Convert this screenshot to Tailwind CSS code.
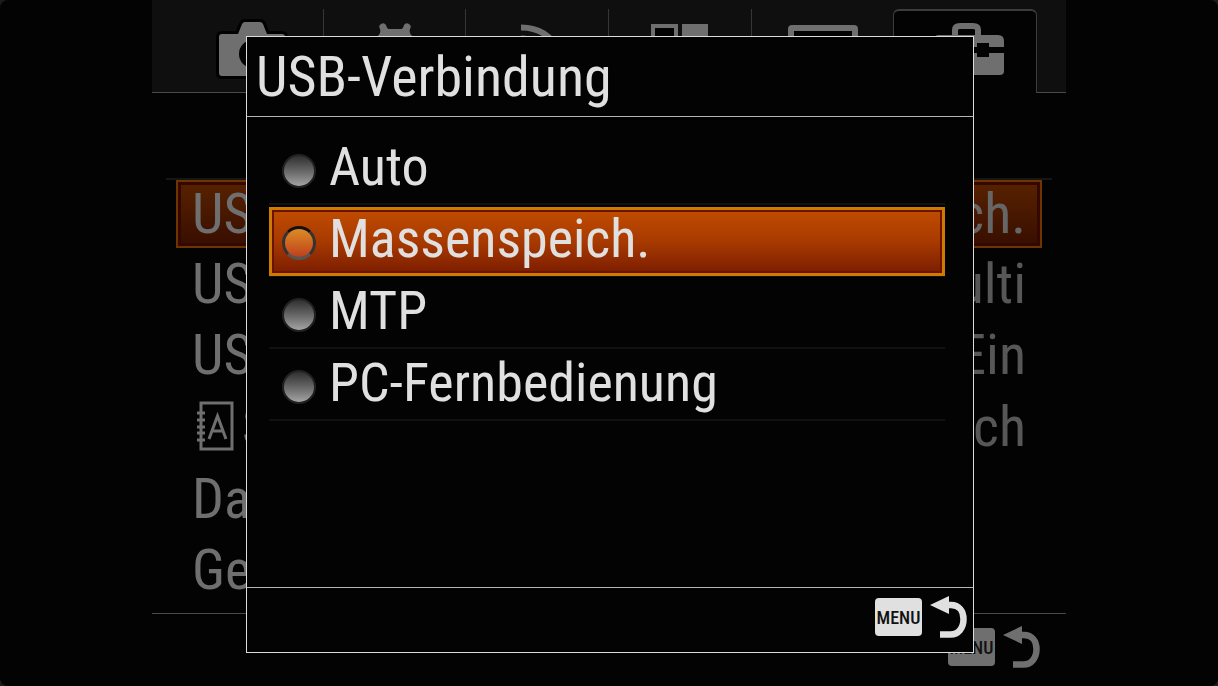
<!DOCTYPE html>
<html lang="de">
<head>
    <meta charset="UTF-8">
    <meta name="viewport" content="width=device-width, initial-scale=1.0">
    <title>USB-Verbindung</title>
    <script src="https://cdn.jsdelivr.net/npm/@tailwindcss/browser@4"></script>
</head>
<body class="bg-[#1c1c1c] font-['Liberation_Sans_Narrow','Roboto_Condensed','Open_Sans_Condensed','Liberation_Sans',sans-serif]">

<svg class="hidden">
    <symbol id="back" viewBox="0 0 37 42">
        <path d="M0 9 19 0v18z" fill="currentColor"/>
        <path d="M17 9h4c8 0 12.500 6 12.500 14 0 9-5 15.500-13 15.500H10" fill="none" stroke="currentColor" stroke-width="6.500"/>
    </symbol>
</svg>

<div class="relative min-h-screen bg-[#030303] rounded-lg overflow-hidden flex flex-col">

    <!-- Menü im Hintergrund -->
    <main class="w-full max-w-[914px] mx-auto grow flex flex-col text-[#6f6f6f]">
        <nav class="h-[93px] pt-[9px] flex bg-[#0f0f0f]">
            <div class="w-[29px] border-b border-[#4a4a4a] -mt-[9px]"></div>
            <button type="button" aria-label="Kamera" class="flex-1 border-b border-b-[#4a4a4a] flex justify-center pt-[13px]">
                <svg class="w-[68px] h-14 overflow-visible" viewBox="0 0 68 56">
                    <path d="M4 12H20L24 2Q25 0 27 0H42Q44 0 45 2L49 12H64Q67 12 67 15V51Q67 54 64 54H4Q1 54 1 51V15Q1 12 4 12Z" fill="currentColor" stroke="#000" stroke-width="6" paint-order="stroke"/>
                    <circle cx="35" cy="32" r="14" fill="#030303"/>
                </svg>
            </button>
            <button type="button" aria-label="Benutzereinstellungen" class="flex-1 border-b border-b-[#4a4a4a] border-l border-l-[#363636] flex justify-center pt-[14px]">
                <svg class="w-14 h-14" viewBox="0 0 56 56">
                    <path d="M14 1Q17-1 19 2 20 6 22 6H34Q36 6 37 2 39-1 42 1 45 3 43 6 42 9 44 12L56 20V36L44 42 42 54H14L12 42 0 36V20L12 12Q14 9 13 6 11 3 14 1Z" fill="currentColor"/>
                    <circle cx="28" cy="28" r="9" fill="#030303"/>
                </svg>
            </button>
            <button type="button" aria-label="Drahtlos" class="flex-1 border-b border-b-[#4a4a4a] border-l border-l-[#363636] flex justify-center pt-[15px]">
                <svg class="w-10 h-14 overflow-visible" viewBox="0 0 40 56" fill="none" stroke="currentColor" stroke-width="6">
                    <path d="M4 3.500C20 3.500 34 10 42 28M4 14.500C15 14.500 25 22 30 32M4 26C11 26 16 30 19 37"/>
                </svg>
            </button>
            <button type="button" aria-label="Applikation" class="flex-1 border-b border-b-[#4a4a4a] border-l border-l-[#363636] flex justify-center pt-[15px]">
                <svg class="w-[58px] h-14" viewBox="0 0 58 56" fill="currentColor">
                    <path d="M2 2H25V25H2Z" fill="#030303" stroke="currentColor" stroke-width="4"/>
                    <path d="M31 0H57V26H31ZM0 30H26V56H0ZM31 30H57V56H31Z"/>
                </svg>
            </button>
            <button type="button" aria-label="Wiedergabe" class="flex-1 border-b border-b-[#4a4a4a] border-l border-l-[#363636] flex justify-center pt-4">
                <svg class="w-[70px] h-[52px]" viewBox="0 0 70 52">
                    <rect x="3" y="3" width="64" height="46" rx="1" fill="#030303" stroke="currentColor" stroke-width="6"/>
                    <path d="M28 15 46 26 28 37Z" fill="currentColor"/>
                </svg>
            </button>
            <button type="button" aria-label="Einstellung" class="flex-1 rounded-t-md border-t-2 border-r border-l border-[#3c3c3c] bg-[#030303] flex justify-center pt-3">
                <svg class="w-[78px] h-[54px] ml-2" viewBox="0 0 78 54">
                    <path d="M25 13V7Q25 3 30 3H43Q48 3 48 7V13" fill="none" stroke="currentColor" stroke-width="6"/>
                    <path d="M4 24V17Q4 12 9 12H68Q74 12 74 18V24H59V20H47V24H31V20H19V24ZM4 30H19V34H31V30H47V34H59V30H74V48Q74 52 70 52H8Q4 52 4 48Z" fill="currentColor"/>
                </svg>
            </button>
            <div class="w-[29px] border-b border-[#4a4a4a]"></div>
        </nav>

        <ul class="mt-[85px] mx-[14px] px-[10px] border-t-2 border-[#161616] text-[56px] leading-[68px] whitespace-nowrap">
            <li class="h-[70px]">
                <button type="button" class="w-full h-[68px] px-[14px] flex justify-between leading-[64px] border-2 border-[#6e3500] bg-linear-to-b from-[#582200] to-[#380e00] shadow-[inset_0_0_0_3px_#340700]">
                    <span>USB</span>
                    <span class="text-[#666]">ich.</span>
                </button>
            </li>
            <li>
                <button type="button" class="w-full h-[71px] px-4 flex justify-between">
                    <span>USB</span>
                    <span class="text-[#575757]">Multi</span>
                </button>
            </li>
            <li>
                <button type="button" class="w-full h-[72px] px-4 flex justify-between">
                    <span>USB</span>
                    <span class="text-[#575757]">Ein</span>
                </button>
            </li>
            <li>
                <button type="button" class="w-full h-[72px] px-4 flex justify-between">
                    <span class="flex gap-[6px]">
                        <svg class="w-11 h-[51px] mt-2 shrink-0" viewBox="0 0 44 51" fill="none" stroke="currentColor" stroke-width="3">
                            <path d="M9 2H40V48H9ZM5 12H13M5 19H13M5 26H13M5 32H13M5 39H13M17 38 25.500 15 34 38M20 30H31"/>
                        </svg>
                        Spr
                    </span>
                    <span class="text-[#575757]">Deutsch</span>
                </button>
            </li>
            <li>
                <button type="button" class="w-full h-[71px] px-4 flex">Datum</button>
            </li>
            <li>
                <button type="button" class="w-full h-[72px] px-4 flex">Gebiet</button>
            </li>
        </ul>

        <div class="mt-[5px] border-t border-[#4a4a4a] grow flex items-start justify-end gap-2 pt-3 pr-[26px]">
            <button type="button" class="mt-[2px] w-[47px] h-[38px] rounded-sm bg-[#6f6f6f] text-[#111] text-[18px] font-medium">MENU</button>
            <button type="button" aria-label="Zurück"><svg class="w-[37px] h-[42px]"><use href="#back"/></svg></button>
        </div>
    </main>

    <!-- Auswahldialog -->
    <div class="absolute inset-0 pt-9 pb-[33px] pl-[2px] flex justify-center">
        <form role="dialog" aria-labelledby="title" class="w-full max-w-[728px] flex flex-col bg-[#030303] border border-[#dcdcdc] text-[#e0e0e0]">
            <h1 id="title" class="h-[80px] border-b border-[#b4b4b4] pl-[9px] text-[56px] leading-[80px]">USB-Verbindung</h1>

            <div class="grow pt-4 pl-[22px] pr-[28px] text-[54px] leading-[68px]">
                <label class="h-[72px] pl-[13px] flex gap-[13px] border-b-2 border-[#111]">
                    <input type="radio" name="usb" class="appearance-none mt-[21px] size-[34px] rounded-full border-2 border-[#222] bg-linear-to-b from-[#303030] to-[#a4a4a4]">
                    Auto
                </label>
                <label class="h-[72px] pl-[13px] flex gap-[13px] border-b-2 border-[#111] relative">
                    <span class="absolute inset-x-0 top-[2px] bottom-[-1px] border-[3px] border-[#d17a00] bg-linear-to-b from-[#c04c00] via-[#a83a00] to-[#7c1d00] shadow-[inset_0_0_0_2px_#6a1400]"></span>
                    <input type="radio" name="usb" checked class="relative appearance-none mt-[21px] size-[34px] rounded-full border-[3px] border-t-[#111] border-x-[#333] border-b-[#555] bg-linear-to-b from-[#dc8a26] to-[#bd3f1c]">
                    <span class="relative">Massenspeich.</span>
                </label>
                <label class="h-[72px] pl-[13px] flex gap-[13px] border-b-2 border-[#111]">
                    <input type="radio" name="usb" class="appearance-none mt-[21px] size-[34px] rounded-full border-2 border-[#222] bg-linear-to-b from-[#303030] to-[#a4a4a4]">
                    MTP
                </label>
                <label class="h-[72px] pl-[13px] flex gap-[13px] border-b-2 border-[#111]">
                    <input type="radio" name="usb" class="appearance-none mt-[21px] size-[34px] rounded-full border-2 border-[#222] bg-linear-to-b from-[#303030] to-[#a4a4a4]">
                    PC-Fernbedienung
                </label>
            </div>

            <div class="h-[65px] border-t border-[#b4b4b4] flex items-start justify-end gap-2 pt-2 pr-[6px]">
                <button type="button" class="mt-[2px] w-[47px] h-[38px] rounded-sm bg-[#e0e0e0] text-[#111] text-[18px] font-medium">MENU</button>
                <button type="button" aria-label="Zurück"><svg class="w-[37px] h-[42px]"><use href="#back"/></svg></button>
            </div>
        </form>
    </div>
</div>

</body>
</html>
